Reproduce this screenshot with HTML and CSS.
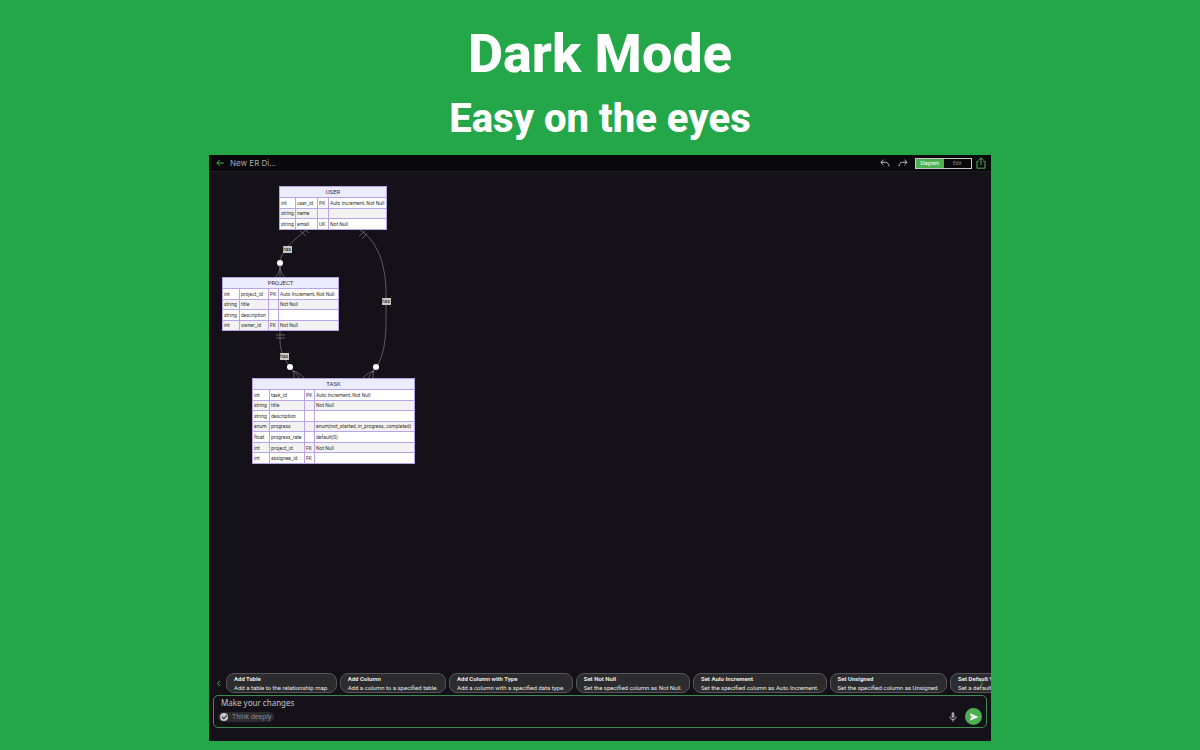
FILE: index.html
```
<!DOCTYPE html>
<html lang="en">
<head>
    <meta charset="UTF-8">
    <meta name="viewport" content="width=device-width, initial-scale=1.0">
    <title>Dark Mode</title>
    <link rel="stylesheet" href="styles.css">
</head>
<body>
    <header class="promo">
        <h1>Dark Mode</h1>
        <h2>Easy on the eyes</h2>
    </header>

    <main class="app">
        <div class="topbar">
            <button class="icon-button back" aria-label="Back">
                <svg width="8" height="8" viewBox="0 0 8 8"><path d="M7.8 4H.8M3.8 1L.8 4l3 3"/></svg>
            </button>
            <span class="doc-title">New ER Di...</span>
            <button class="icon-button" aria-label="Undo">
                <svg width="10" height="8" viewBox="0 0 10 8"><path d="M3.5 .8L.8 3.3l2.7 2.6M1 3.3h4.5c2 0 3.3 1.5 3.5 4"/></svg>
            </button>
            <button class="icon-button" aria-label="Redo">
                <svg width="10" height="8" viewBox="0 0 10 8"><path d="M6.5 .8l2.7 2.5-2.7 2.6M9 3.3H4.5c-2 0-3.3 1.5-3.5 4"/></svg>
            </button>
            <div class="switch">
                <button class="active">Diagram</button>
                <button>Edit</button>
            </div>
            <button class="icon-button share" aria-label="Share">
                <svg width="10" height="12" viewBox="0 0 10 12"><path d="M3 4.2H1v7h8v-7H7M5 8V1M2.8 3L5 .8 7.2 3"/></svg>
            </button>
        </div>

        <div class="canvas">
            <svg class="edges" width="230" height="300" viewBox="0 0 230 300">
                <!-- user to project -->
                <path d="M97 58C88 66 71 78 71 91v14M71 94c0 5-2 8-4 11M71 94c0 5 2 8 4 11"/>
                <path d="M91 59l6 5M94 56l6 5"/>
                <!-- user to task -->
                <path d="M151 58c16 10 26 32 26 64v28c0 22-4 38-10 45l-4 5"/>
                <path d="M150 64l6-5M153 67l5-6"/>
                <path d="M165 199c-4 1-8 3-11 7M165 199c-3 2-5 4-5 7M165 199c-1 2-1 4-1 7"/>
                <!-- project to task -->
                <path d="M71 159v10c0 10 5 19 10 26l3 4"/>
                <path d="M67 163h9M67 166h9"/>
                <path d="M84 199c4 1 8 3 11 7M84 199c3 2 5 4 6 7M84 199c1 2 1 4 1 7"/>
                <circle cx="71" cy="91" r="3"/>
                <circle cx="167" cy="195" r="3"/>
                <circle cx="81" cy="195" r="3"/>
                <rect x="74" y="74" width="9" height="7"/>
                <rect x="173" y="126" width="9" height="7"/>
                <rect x="71" y="181" width="9" height="7"/>
                <text x="78" y="79">has</text>
                <text x="177" y="131">has</text>
                <text x="75" y="186">has</text>
            </svg>

            <table class="entity user">
                <colgroup><col class="c16"><col class="c22"><col class="c11"><col></colgroup>
                <thead><tr><th colspan="4">USER</th></tr></thead>
                <tbody>
                    <tr><td>int</td><td>user_id</td><td>PK</td><td>Auto Increment, Not Null</td></tr>
                    <tr><td>string</td><td>name</td><td></td><td></td></tr>
                    <tr><td>string</td><td>email</td><td>UK</td><td>Not Null</td></tr>
                </tbody>
            </table>

            <table class="entity project">
                <colgroup><col class="c17"><col class="c29"><col class="c10"><col></colgroup>
                <thead><tr><th colspan="4">PROJECT</th></tr></thead>
                <tbody>
                    <tr><td>int</td><td>project_id</td><td>PK</td><td>Auto Increment, Not Null</td></tr>
                    <tr><td>string</td><td>title</td><td></td><td>Not Null</td></tr>
                    <tr><td>string</td><td>description</td><td></td><td></td></tr>
                    <tr><td>int</td><td>owner_id</td><td>FK</td><td>Not Null</td></tr>
                </tbody>
            </table>

            <table class="entity task">
                <colgroup><col class="c17"><col class="c35"><col class="c10"><col></colgroup>
                <thead><tr><th colspan="4">TASK</th></tr></thead>
                <tbody>
                    <tr><td>int</td><td>task_id</td><td>PK</td><td>Auto Increment, Not Null</td></tr>
                    <tr><td>string</td><td>title</td><td></td><td>Not Null</td></tr>
                    <tr><td>string</td><td>description</td><td></td><td></td></tr>
                    <tr><td>enum</td><td>progress</td><td></td><td>enum(not_started, in_progress, completed)</td></tr>
                    <tr><td>float</td><td>progress_rate</td><td></td><td>default(0)</td></tr>
                    <tr><td>int</td><td>project_id</td><td>FK</td><td>Not Null</td></tr>
                    <tr><td>int</td><td>assignee_id</td><td>FK</td><td></td></tr>
                </tbody>
            </table>
        </div>

        <div class="suggestions">
            <button class="icon-button scroll-left" aria-label="Previous">
                <svg width="5" height="7" viewBox="0 0 5 7"><path d="M4 .8L1.2 3.5 4 6.2"/></svg>
            </button>
            <div class="chips">
                <button class="chip"><b>Add Table</b><span>Add a table to the relationship map.</span></button>
                <button class="chip"><b>Add Column</b><span>Add a column to a specified table.</span></button>
                <button class="chip"><b>Add Column with Type</b><span>Add a column with a specified data type.</span></button>
                <button class="chip"><b>Set Not Null</b><span>Set the specified column as Not Null.</span></button>
                <button class="chip"><b>Set Auto Increment</b><span>Set the specified column as Auto Increment.</span></button>
                <button class="chip"><b>Set Unsigned</b><span>Set the specified column as Unsigned.</span></button>
                <button class="chip"><b>Set Default Value</b><span>Set a default value for the column.</span></button>
            </div>
            <button class="icon-button scroll-right" aria-label="Next">
                <svg width="5" height="7" viewBox="0 0 5 7"><path d="M1 .8l2.8 2.7L1 6.2"/></svg>
            </button>
        </div>

        <form class="composer">
            <input class="prompt" type="text" placeholder="Make your changes" aria-label="Make your changes">
            <div class="composer-row">
                <label class="think"><input type="checkbox" checked>Think deeply</label>
                <button class="icon-button mic" type="button" aria-label="Voice input">
                    <svg width="8" height="10" viewBox="0 0 8 10"><rect x="2.6" y=".3" width="2.8" height="5.6" rx="1.4"/><path d="M1 4.5c0 4 6 4 6 0M4 7.5v2.2"/></svg>
                </button>
                <button class="send" type="button" aria-label="Send">
                    <svg width="10" height="8" viewBox="0 0 10 8"><path d="M.8 .3L9.5 4 .8 7.7 2 4.6 5.5 4 2 3.4z"/></svg>
                </button>
            </div>
        </form>
    </main>
</body>
</html>
```
FILE: styles.css
```
* {
    box-sizing: border-box;
}

body {
    margin: 0;
    min-height: 100vh;
    display: flex;
    flex-direction: column;
    background-color: #24a749;
    font-family: Roboto, sans-serif;
}

.promo {
    padding-top: 21px;
    text-align: center;
    color: white;
}

.promo h1 {
    margin: 0;
    font-size: 54px;
    line-height: 66px;
    font-weight: 800;
}

.promo h2 {
    margin: 0;
    font-size: 40px;
    line-height: 64px;
    padding-bottom: 4px;
    font-weight: 800;
}

button {
    font-family: inherit;
    padding: 0;
    border: none;
    background: none;
    cursor: pointer;
}

.app {
    flex: 1;
    width: calc(100% - 418px);
    margin: 0 auto 9px;
    padding-bottom: 13px;
    display: flex;
    flex-direction: column;
    background-color: #141218;
    overflow: hidden;
}

/* top bar */
.topbar {
    height: 17px;
    padding: 0 5px 0 7px;
    display: flex;
    align-items: center;
    gap: 8px;
    background-color: #0a090c;
    border-bottom: 1px solid #1f1d24;
}

.icon-button {
    display: flex;
}

.icon-button svg {
    fill: none;
    stroke: #b9b9bd;
    stroke-width: 1;
}

.back svg,
.share svg,
.scroll-left svg,
.scroll-right svg {
    stroke: #4caf50;
}

.doc-title {
    flex: 1;
    margin-left: -2px;
    font-family: Inter, sans-serif;
    font-size: 8px;
    color: #a9a8ac;
}

.switch {
    display: flex;
    width: 57px;
    height: 11px;
    margin-left: -1px;
    border: 1px solid #c8c8c8;
}

.switch button {
    flex: 1;
    font-size: 5px;
    line-height: 9px;
    color: #8c8c90;
}

.switch .active {
    background-color: #4caf50;
    color: white;
}

.share {
    margin-left: -4px;
}

/* diagram */
.canvas {
    flex: 1;
    position: relative;
}

.edges {
    position: absolute;
    left: 0;
    top: 0;
}

.edges path {
    fill: none;
    stroke: #8b8a8e;
    stroke-width: 0.6;
}

.edges circle {
    fill: white;
}

.edges rect {
    fill: #c9c9c2;
}

.edges text {
    font-size: 5px;
    text-anchor: middle;
    fill: #222;
}

.entity {
    position: absolute;
    table-layout: fixed;
    border-collapse: collapse;
    font-size: 5px;
    line-height: 8px;
    color: #333;
    background-color: white;
}

.entity th {
    height: 11px;
    padding: 0;
    font-size: 6px;
    font-weight: 400;
    background-color: #ececff;
}

.entity th,
.entity td {
    border: 1px solid #b9a4ea;
}

.entity td {
    padding: 0 0 0 1px;
    white-space: nowrap;
}

.entity tbody tr:nth-child(even) {
    background-color: #f2f2f2;
}

.user {
    left: 70px;
    top: 14px;
    width: 108px;
    height: 44px;
}

.project {
    left: 13px;
    top: 105px;
    width: 117px;
    height: 54px;
}

.task {
    left: 43px;
    top: 206px;
    width: 163px;
    height: 86px;
}

.c10 { width: 10px; }
.c11 { width: 11px; }
.c16 { width: 16px; }
.c17 { width: 17px; }
.c22 { width: 22px; }
.c29 { width: 29px; }
.c35 { width: 35px; }

/* suggestion chips */
.suggestions {
    position: relative;
    display: flex;
    align-items: center;
    gap: 5px;
    padding-left: 7px;
    margin-bottom: 2px;
}

.chips {
    flex: 1;
    min-width: 0;
    display: flex;
    gap: 3px;
    overflow: hidden;
}

.chip {
    flex: none;
    height: 20px;
    padding: 0 7px 1px;
    border: 1px solid #56555a;
    border-radius: 8px;
    background-color: #2c2b2e;
    color: #e8e8e8;
    font-size: 6px;
    line-height: 9px;
    text-align: left;
}

.chip b,
.chip span {
    display: block;
}

.scroll-right {
    position: absolute;
    right: 7px;
    top: 7px;
}

/* prompt box */
.composer {
    height: 33px;
    margin: 0 4px;
    padding: 1px 4px 0 4px;
    border: 1px solid #3f8a50;
    border-radius: 5px;
}

.prompt {
    display: block;
    width: 100%;
    height: 11px;
    padding: 0 3px;
    border: none;
    outline: none;
    background: none;
    color: #d0d0d4;
    font-family: "Noto Sans", sans-serif;
    font-size: 8px;
}

.prompt::placeholder {
    color: #c4c3c8;
}

.composer-row {
    display: flex;
    align-items: center;
    gap: 8px;
    height: 17px;
}

.think {
    display: flex;
    align-items: center;
    gap: 4px;
    height: 10px;
    padding: 0 3px 0 2px;
    margin-right: auto;
    border-radius: 5px;
    background-color: #2c2b2e;
    color: #89888c;
    font-size: 7px;
}

.think input {
    appearance: none;
    width: 8px;
    height: 8px;
    margin: 0;
    border-radius: 50%;
    background-color: #c9c9cc;
    display: flex;
    align-items: center;
    justify-content: center;
}

.think input::before {
    content: "";
    width: 4px;
    height: 2px;
    border-left: 1px solid #2c2b2e;
    border-bottom: 1px solid #2c2b2e;
    transform: rotate(-45deg);
}

.mic rect {
    fill: #a5a5a9;
    stroke: none;
}

.send {
    width: 17px;
    height: 17px;
    border-radius: 50%;
    background-color: #4caf50;
    display: flex;
    align-items: center;
    justify-content: center;
}

.send svg {
    fill: white;
}
```
